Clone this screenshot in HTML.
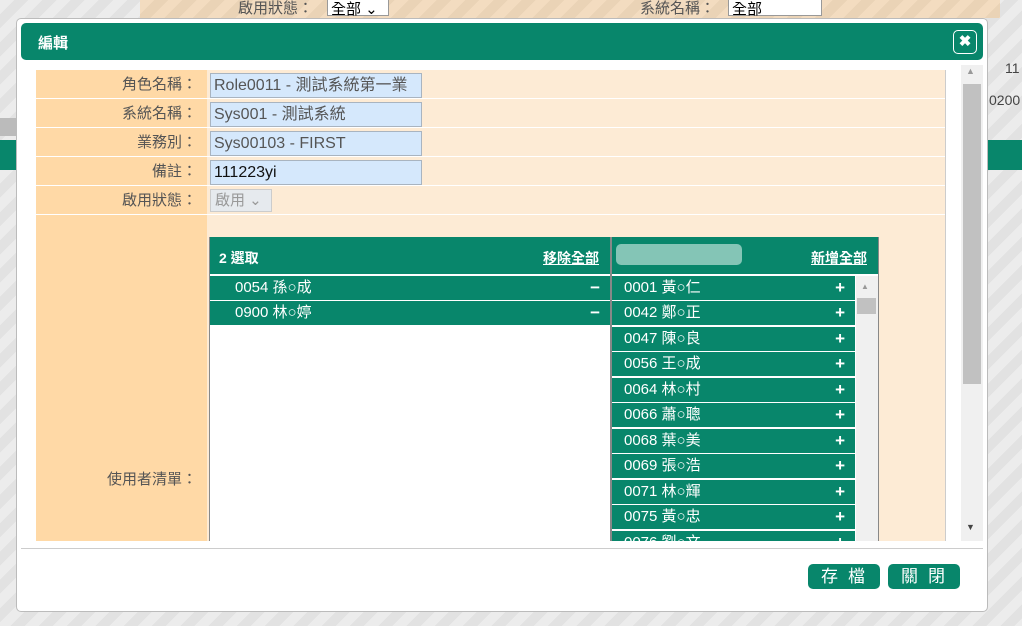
<!DOCTYPE html>
<html><head><meta charset="utf-8">
<style>
*{box-sizing:border-box;margin:0;padding:0}
html,body{width:1022px;height:626px;overflow:hidden}
body{position:relative;font-family:"Liberation Sans","Noto Sans CJK TC",sans-serif;background:repeating-linear-gradient(135deg,#ececec 0 10px,#e2e2e2 10px 20px);}
.abs{position:absolute}
.g{background:#08866b}
.lbl{position:absolute;left:36px;width:171px;background:#ffd9a6;text-align:right;padding-right:10px;font-size:15px;color:#555;border-bottom:1px solid #fff}
.val{position:absolute;left:207px;width:738px;background:#fdebd5;border-bottom:1px solid #fff}
.inp{position:absolute;left:210px;width:212px;height:25px;background:#d5e8fc;border:1px solid #a9b4c0;font-size:16px;color:#555;padding-left:3px;line-height:23px;white-space:nowrap;overflow:hidden}
.it{position:absolute;height:24px;background:#08866b;color:#fff;font-size:15px;line-height:23px}
.it span{position:absolute;right:10px;font-weight:bold;font-size:17px}
.btn{position:absolute;top:564px;width:72px;height:25px;background:#08866b;color:#fff;border-radius:5px;font-size:17px;text-align:center;line-height:25px;letter-spacing:10px;padding-left:8px}
</style></head><body>
<div class="abs" style="left:140px;top:0;width:860px;height:18px;background:repeating-linear-gradient(135deg,#f3dcc0 0 10px,#ead3b6 10px 20px)"></div>
<div class="abs" style="left:0;top:118px;width:16px;height:18px;background:#bbb"></div>
<div class="abs" style="left:238px;top:-3px;font-size:15px;color:#555">啟用狀態：</div>
<div class="abs" style="left:327px;top:-3px;width:62px;height:19px;background:#fff;border:1px solid #999;font-size:15px;padding-left:3px">全部 ⌄</div>
<div class="abs" style="left:640px;top:-3px;font-size:15px;color:#555">系統名稱：</div>
<div class="abs" style="left:728px;top:-3px;width:94px;height:19px;background:#fff;border:1px solid #999;font-size:15px;padding-left:3px">全部</div>
<div class="abs g" style="left:0;top:140px;width:16px;height:30px"></div>
<div class="abs g" style="left:988px;top:140px;width:34px;height:30px"></div>
<div class="abs" style="left:1005px;top:60px;font-size:14px;color:#444">11</div>
<div class="abs" style="left:989px;top:92px;font-size:14px;color:#444">0200</div>

<div class="abs" style="left:16px;top:18px;width:972px;height:594px;background:#fff;border:1px solid #bbb;border-radius:5px"></div>
<div class="abs g" style="left:21px;top:23px;width:962px;height:37px;border-radius:5px"></div>
<div class="abs" style="left:38px;top:32px;color:#fff;font-weight:bold;font-size:15px">編輯</div>
<div class="abs" style="left:953px;top:30px;width:24px;height:24px;border:1px solid #fff;border-radius:5px;color:#fff;text-align:center;font-weight:bold;font-size:15px;line-height:22px">✖</div>

<div class="abs" style="left:36px;top:70px;width:910px;height:471px;background:#fdebd5;border-left:1px solid #ddd;border-right:1px solid #ccc"></div>
<div class="lbl" style="top:70px;height:29px;line-height:29px">角色名稱：</div><div class="val" style="top:70px;height:29px"></div>
<div class="lbl" style="top:99px;height:29px;line-height:29px">系統名稱：</div><div class="val" style="top:99px;height:29px"></div>
<div class="lbl" style="top:128px;height:29px;line-height:29px">業務別：</div><div class="val" style="top:128px;height:29px"></div>
<div class="lbl" style="top:157px;height:29px;line-height:29px">備註：</div><div class="val" style="top:157px;height:29px"></div>
<div class="lbl" style="top:186px;height:29px;line-height:29px">啟用狀態：</div><div class="val" style="top:186px;height:29px"></div>
<div class="lbl" style="top:215px;height:326px;line-height:530px;border:0">使用者清單：</div>
<div class="inp" style="top:73px">Role0011 - 測試系統第一業</div>
<div class="inp" style="top:102px">Sys001 - 測試系統</div>
<div class="inp" style="top:131px">Sys00103 - FIRST</div>
<div class="inp" style="top:160px;color:#111">111223yi</div>
<div class="abs" style="left:210px;top:189px;width:62px;height:23px;background:#e6eaee;border:1px solid #ccc;color:#999;font-size:15px;line-height:21px;padding-left:4px">啟用 ⌄</div>

<div class="abs" style="left:209px;top:237px;width:670px;height:304px;background:#fff;border:1px solid #888;border-bottom:0"></div>
<div class="abs g" style="left:210px;top:237px;width:400px;height:37px"></div>
<div class="abs" style="left:219px;top:248px;color:#fff;font-weight:bold;font-size:14px">2 選取</div>
<div class="abs" style="left:543px;top:248px;color:#fff;font-weight:bold;font-size:14px;text-decoration:underline">移除全部</div>
<div class="abs" style="left:610px;top:237px;width:2px;height:304px;background:#888"></div>
<div class="abs g" style="left:612px;top:237px;width:266px;height:37px"></div>
<div class="abs" style="left:616px;top:244px;width:126px;height:21px;background:#84c5b6;border-radius:5px"></div>
<div class="abs" style="left:811px;top:248px;color:#fff;font-weight:bold;font-size:14px;text-decoration:underline">新增全部</div>
<div class="it" style="left:210px;top:276px;width:400px;padding-left:25px">0054 孫○成<span>−</span></div>
<div class="it" style="left:210px;top:301px;width:400px;padding-left:25px">0900 林○婷<span>−</span></div>
<div class="abs" style="left:856px;top:276px;width:22px;height:265px;background:#f0f0f0"></div>
<div class="abs" style="left:857px;top:298px;width:19px;height:16px;background:#c1c1c1"></div>
<div class="abs" style="left:861px;top:282px;font-size:8px;color:#999">▲</div>
<div class="it" style="left:612px;top:276px;width:243px;padding-left:12px">0001 黃○仁<span>+</span></div>
<div class="it" style="left:612px;top:301px;width:243px;padding-left:12px">0042 鄭○正<span>+</span></div>
<div class="it" style="left:612px;top:327px;width:243px;padding-left:12px">0047 陳○良<span>+</span></div>
<div class="it" style="left:612px;top:352px;width:243px;padding-left:12px">0056 王○成<span>+</span></div>
<div class="it" style="left:612px;top:378px;width:243px;padding-left:12px">0064 林○村<span>+</span></div>
<div class="it" style="left:612px;top:403px;width:243px;padding-left:12px">0066 蕭○聰<span>+</span></div>
<div class="it" style="left:612px;top:429px;width:243px;padding-left:12px">0068 葉○美<span>+</span></div>
<div class="it" style="left:612px;top:454px;width:243px;padding-left:12px">0069 張○浩<span>+</span></div>
<div class="it" style="left:612px;top:480px;width:243px;padding-left:12px">0071 林○輝<span>+</span></div>
<div class="it" style="left:612px;top:505px;width:243px;padding-left:12px">0075 黃○忠<span>+</span></div>
<div class="it" style="left:612px;top:531px;width:243px;height:10px;padding-left:12px;overflow:hidden">0076 劉○文<span>+</span></div>

<div class="abs" style="left:961px;top:65px;width:22px;height:476px;background:#f0f0f0"></div>
<div class="abs" style="left:963px;top:84px;width:18px;height:300px;background:#c1c1c1"></div>
<div class="abs" style="left:966px;top:66px;font-size:9px;color:#999">▲</div>
<div class="abs" style="left:966px;top:522px;font-size:9px;color:#444">▼</div>
<div class="abs" style="left:21px;top:548px;width:962px;height:1px;background:#ccc"></div>
<div class="btn" style="left:808px">存檔</div>
<div class="btn" style="left:888px">關閉</div>
</body></html>
